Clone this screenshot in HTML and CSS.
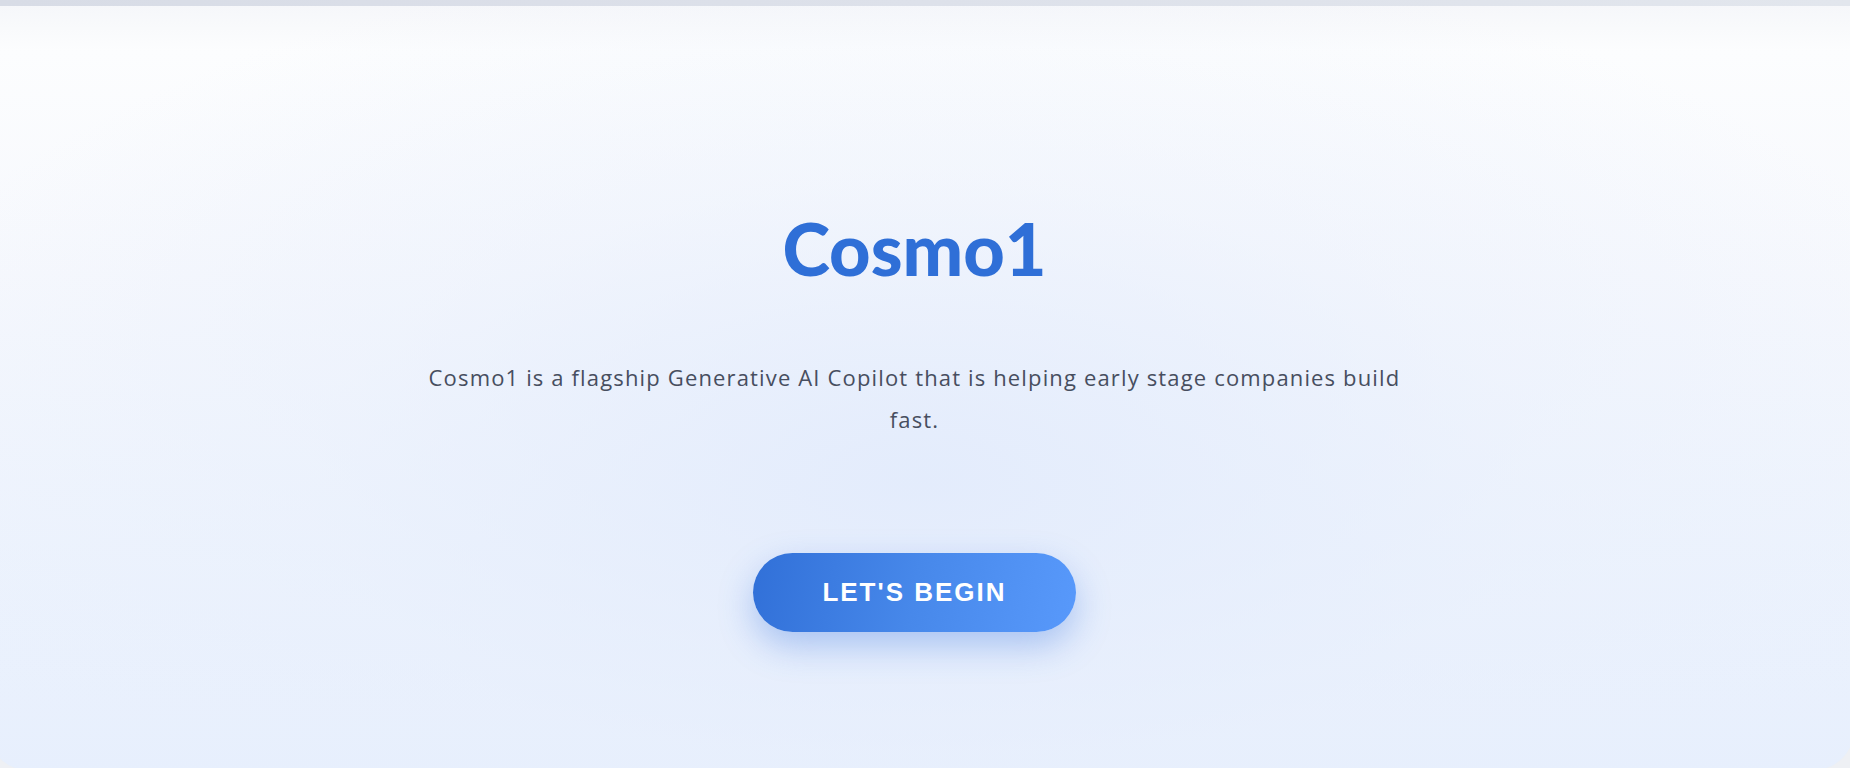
FILE: index.html
```html
<!DOCTYPE html>
<html lang="en">
<head>
<meta charset="utf-8">
<title>Cosmo1</title>
<link rel="stylesheet" href="styles.css">
</head>
<body>
<div class="topbar"></div>
<main class="card">
  <section class="hero">
    <h1 class="title">Cosmo1</h1>
    <p class="lead">Cosmo1 is a flagship Generative AI Copilot that is helping early stage companies build fast.</p>
    <button class="cta" type="button">LET'S BEGIN</button>
  </section>
</main>
</body>
</html>
```
FILE: styles.css
```css
html, body {
  margin: 0;
  padding: 0;
}
body {
  background: #eef0f4;
  overflow: hidden;
  height: 768px;
  font-family: "Lato", "Open Sans", sans-serif;
}
.topbar {
  height: 6px;
  background: linear-gradient(90deg, #d8dce6 0%, #dde1ea 50%, #e2e6ed 100%);
}
.card {
  margin-left: -12px;
  width: calc(100% + 16px);
  height: 764px;
  padding-right: 13px;
  box-sizing: border-box;
  border-radius: 0 0 40px 40px;
  background:
    radial-gradient(ellipse 60% 70% at 50% 62%, rgba(226, 235, 252, 0.9) 0%, rgba(232, 239, 252, 0.4) 55%, rgba(255, 255, 255, 0) 100%),
    linear-gradient(180deg, #f6f7fa 0%, #fcfdfe 6%, #f6f8fd 35%, #edf3fd 70%, #e7effd 100%);
  display: flex;
  justify-content: center;
}
.hero {
  display: flex;
  flex-direction: column;
  align-items: center;
  padding-top: 197px;
}
.title {
  margin: 0;
  font-family: "Lato", sans-serif;
  font-weight: 900;
  font-size: 72px;
  line-height: 90px;
  color: #2f6fd7;
  letter-spacing: 0;
}
.lead {
  margin: 63px 0 0;
  max-width: 1010px;
  text-align: center;
  font-family: "Open Sans", sans-serif;
  font-size: 22px;
  letter-spacing: 1.15px;
  line-height: 42px;
  color: #474e5f;
}
.cta {
  margin-top: 113px;
  width: 323px;
  height: 79px;
  border: none;
  border-radius: 40px;
  background: linear-gradient(100deg, #3170d8 0%, #4788ea 50%, #5899fb 100%);
  box-shadow: 0 14px 34px rgba(60, 118, 224, 0.36);
  color: #ffffff;
  font-family: "Liberation Sans", Arial, sans-serif;
  font-weight: 700;
  font-size: 26px;
  letter-spacing: 2px;
  cursor: pointer;
}
```
